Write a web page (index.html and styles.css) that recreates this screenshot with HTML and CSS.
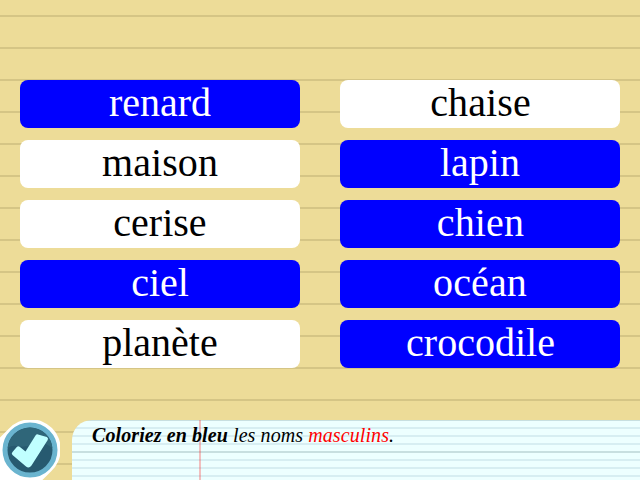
FILE: index.html
```
<!DOCTYPE html>
<html lang="fr">
<head>
<meta charset="utf-8">
<title>Les noms masculins</title>
<link rel="stylesheet" href="styles.css">
</head>
<body>
<main class="words">
<button class="word selected">renard</button>
<button class="word loose">chaise</button>
<button class="word wide">maison</button>
<button class="word selected">lapin</button>
<button class="word">cerise</button>
<button class="word selected loose">chien</button>
<button class="word selected">ciel</button>
<button class="word selected wide">océan</button>
<button class="word">planète</button>
<button class="word selected shifted">crocodile</button>
</main>
<footer class="bar">
<svg class="check" viewBox="0 0 60 60" width="60" height="60"><path d="M0 60V17.6L8.8 8.8A30 30 0 1 1 51.2 51.2L42.4 60Z" fill="#fff"/><circle cx="30" cy="30" r="25" fill="#275a70" stroke="#6ab4cf" stroke-width="5"/><path d="M7.6 28A22.500 22.500 0 0 1 52.400 28Q42 20 34 24T16 26Q12 25 7.600 28Z" fill="#2f6679"/><path d="M12.500 32L17 26.800Q18.200 25.600 19.600 26.800L25.500 31.500L35.500 15.500Q36.500 14 38 14.400L46.800 17Q48.700 18 47.700 20L31.500 45.500Q29 49 26 46.500L12.500 35Q11 33.500 12.500 32Z" fill="#c0ffff"/></svg>
<p class="instruction"><b>Coloriez en bleu</b> les noms <span class="gender">masculins</span>.</p>
</footer>
</body>
</html>
```
FILE: styles.css
```
* { box-sizing: border-box; }
body {
  margin: 0;
  height: 480px;
  overflow: hidden;
  display: flex;
  flex-direction: column;
  justify-content: space-between;
  font-family: "Liberation Serif", serif;
  background: repeating-linear-gradient(#eddc98 0 15px, #d5c585 15px 17px, #eddc98 17px 32px);
}
.words {
  display: grid;
  grid-template-columns: 280px 280px;
  grid-auto-rows: 48px;
  gap: 12px 40px;
  padding: 80px 20px 0;
}
.word {
  border: 0;
  padding: 0 0 2px;
  border-radius: 8px;
  background: #fff;
  color: #000;
  font: 40px/46px "Liberation Serif", serif;
}
.selected { background: #00f; color: #fff; }
.wide { letter-spacing: 0.1px; }
.loose { letter-spacing: 0.13px; padding-left: 1px; }
.shifted { padding-left: 1px; }
.bar { display: flex; gap: 12px; height: 60px; }
.check { flex: none; }
.instruction {
  flex: 1;
  margin: 0;
  padding: 4px 20px;
  border-top-left-radius: 20px;
  font: italic 20px/23px "Liberation Serif", serif;
  letter-spacing: 0.09px;
  background:
    linear-gradient(rgba(255, 0, 0, 0.25), rgba(255, 0, 0, 0.25)) 127px 0 / 2px 100% no-repeat,
    repeating-linear-gradient(#c8dfe0 0 1px, transparent 1px 31px, #c8dfe0 31px 32px),
    repeating-linear-gradient(#d7eef2 0 1px, #edffff 1px 7px, #d7eef2 7px 8px);
}
.gender { color: #f00; }
```
